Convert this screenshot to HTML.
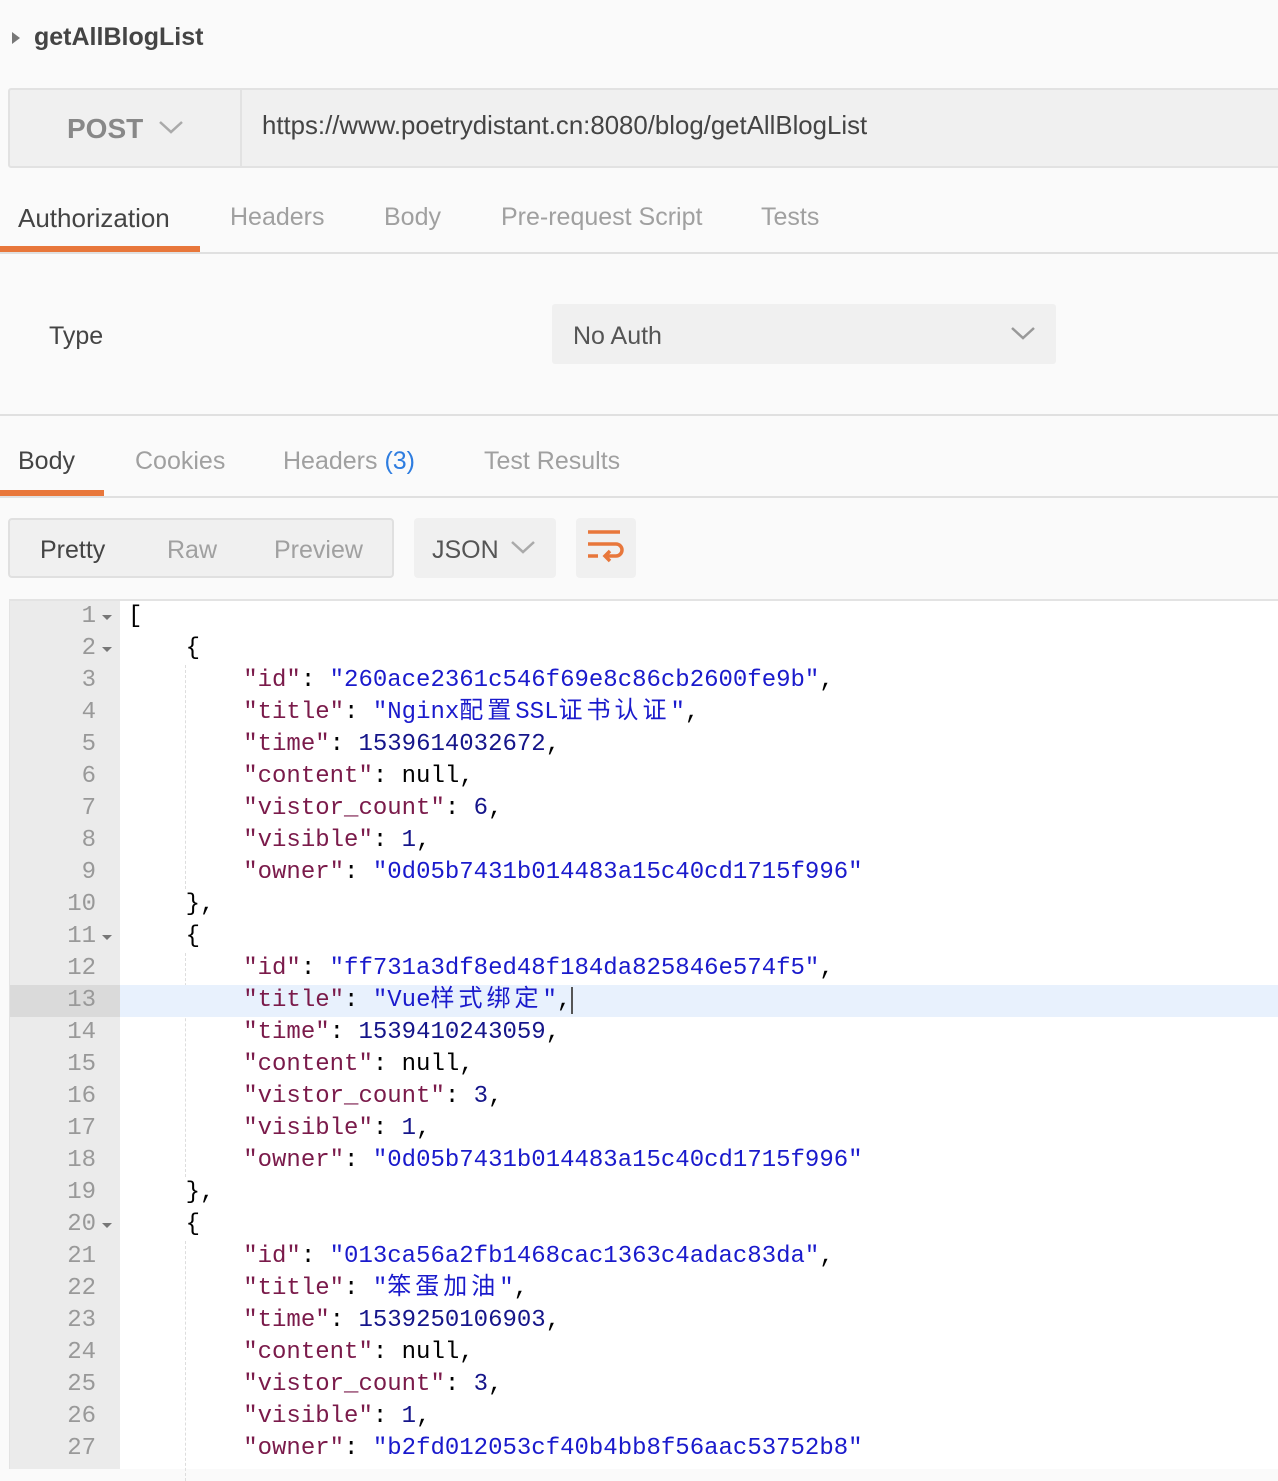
<!DOCTYPE html>
<html><head><meta charset="utf-8"><style>
*{margin:0;padding:0;box-sizing:border-box}
body{width:1278px;height:1456px;overflow:hidden;background:#fafafa;font-family:"Liberation Sans","Noto Sans CJK SC",sans-serif;position:relative}
.a{position:absolute}
.t{font-size:25px;color:#a0a0a0}
.code{position:absolute;left:9px;top:599px;width:1275px;height:870px;background:#fff;border-top:2px solid #e3e3e3;border-left:1px solid #e3e3e3}
.gut{position:absolute;left:0;top:0;width:110px;height:100%;background:#ebebeb}
.ln{position:absolute;left:0;height:32px;width:1270px;font-family:"Liberation Mono","Noto Sans CJK SC",monospace;font-size:24px;line-height:32px;color:#000;white-space:pre}
.ln .n{position:absolute;left:0;width:86px;text-align:right;color:#999}
.ln .c{position:absolute;left:118px}
.k{color:#7a1a4a}.s{color:#1a1acc}.d{color:#15158a}
.cj{letter-spacing:4px}
.hl{background:#e8f1fd}
.hl .n{background:#dadada;width:110px;padding-right:24px}
.fold{position:absolute;left:92px;top:14px;border-left:5px solid transparent;border-right:5px solid transparent;border-top:5px solid #777}
.guide{position:absolute;left:175px;border-left:1px dashed #ddd}
</style></head><body>
<div class="a" style="left:12px;top:32px;border-top:6px solid transparent;border-bottom:6px solid transparent;border-left:8px solid #777"></div>
<div class="a" style="left:34px;top:23px;font-size:25px;color:#444;font-weight:bold">getAllBlogList</div>
<div class="a" style="left:8px;top:88px;width:1280px;height:80px;background:#f0f0f0;border:2px solid #e2e2e2;border-radius:3px"></div>
<div class="a" style="left:240px;top:90px;width:2px;height:76px;background:#e2e2e2"></div>
<div class="a" style="left:67px;top:113px;font-size:28px;color:#888;font-weight:bold">POST</div>
<svg class="a" style="left:158px;top:120px" width="26" height="16"><path d="M2 2 L13 12 L24 2" stroke="#aaa" stroke-width="2.5" fill="none"/></svg>
<div class="a" style="left:262px;top:112px;font-size:25.8px;color:#444">https://www.poetrydistant.cn:8080/blog/getAllBlogList</div>
<div class="a t" style="left:18px;top:203px;color:#444;font-size:26px">Authorization</div>
<div class="a t" style="left:230px;top:203px">Headers</div>
<div class="a t" style="left:384px;top:203px">Body</div>
<div class="a t" style="left:501px;top:203px">Pre-request Script</div>
<div class="a t" style="left:761px;top:203px">Tests</div>
<div class="a" style="left:0;top:252px;width:1278px;height:2px;background:#e0e0e0"></div>
<div class="a" style="left:0;top:246px;width:200px;height:6px;background:#e8773b"></div>
<div class="a t" style="left:49px;top:322px;color:#444">Type</div>
<div class="a" style="left:552px;top:304px;width:504px;height:60px;background:#f0f0f0;border-radius:3px"></div>
<div class="a t" style="left:573px;top:322px;color:#555">No Auth</div>
<svg class="a" style="left:1010px;top:326px" width="26" height="16"><path d="M2 2 L13 12 L24 2" stroke="#999" stroke-width="2.5" fill="none"/></svg>
<div class="a" style="left:0;top:414px;width:1278px;height:2px;background:#e0e0e0"></div>
<div class="a t" style="left:18px;top:447px;color:#444">Body</div>
<div class="a t" style="left:135px;top:447px">Cookies</div>
<div class="a t" style="left:283px;top:447px">Headers <span style="color:#2e7de0">(3)</span></div>
<div class="a t" style="left:484px;top:447px">Test Results</div>
<div class="a" style="left:0;top:496px;width:1278px;height:2px;background:#e0e0e0"></div>
<div class="a" style="left:0;top:490px;width:104px;height:6px;background:#e8773b"></div>
<div class="a" style="left:8px;top:518px;width:386px;height:60px;background:#f0f0f0;border:2px solid #e0e0e0;border-radius:4px"></div>
<div class="a t" style="left:40px;top:536px;color:#444">Pretty</div>
<div class="a t" style="left:167px;top:536px">Raw</div>
<div class="a t" style="left:274px;top:536px">Preview</div>
<div class="a" style="left:414px;top:518px;width:142px;height:60px;background:#f0f0f0;border-radius:4px"></div>
<div class="a t" style="left:432px;top:536px;color:#555">JSON</div>
<svg class="a" style="left:510px;top:540px" width="26" height="16"><path d="M2 2 L13 12 L24 2" stroke="#aaa" stroke-width="2.5" fill="none"/></svg>
<div class="a" style="left:576px;top:518px;width:60px;height:60px;background:#f0f0f0;border-radius:4px"></div>
<svg class="a" style="left:586px;top:528px" width="40" height="40"><g stroke="#e8773b" stroke-width="3.5" fill="none"><path d="M2 4 H34"/><path d="M2 16 H30 a6 6 0 0 1 0 12 H20"/><path d="M2 28 H12"/><path d="M24 23 L19 28 L24 33"/></g></svg>
<div class="code">
<div class="gut"></div>
<div class="guide" style="top:64px;height:224px"></div>
<div class="guide" style="top:352px;height:224px"></div>
<div class="guide" style="top:640px;height:240px"></div>
<div class="ln" style="top:0"><span class="n">1</span><i class="fold"></i><span class="c">[</span></div>
<div class="ln" style="top:32px"><span class="n">2</span><i class="fold"></i><span class="c">    {</span></div>
<div class="ln" style="top:64px"><span class="n">3</span><span class="c">        <span class="k">"id"</span>: <span class="s">"260ace2361c546f69e8c86cb2600fe9b"</span>,</span></div>
<div class="ln" style="top:96px"><span class="n">4</span><span class="c">        <span class="k">"title"</span>: <span class="s">"Nginx<span class="cj">配置</span>SSL<span class="cj">证书认证</span>"</span>,</span></div>
<div class="ln" style="top:128px"><span class="n">5</span><span class="c">        <span class="k">"time"</span>: <span class="d">1539614032672</span>,</span></div>
<div class="ln" style="top:160px"><span class="n">6</span><span class="c">        <span class="k">"content"</span>: null,</span></div>
<div class="ln" style="top:192px"><span class="n">7</span><span class="c">        <span class="k">"vistor_count"</span>: <span class="d">6</span>,</span></div>
<div class="ln" style="top:224px"><span class="n">8</span><span class="c">        <span class="k">"visible"</span>: <span class="d">1</span>,</span></div>
<div class="ln" style="top:256px"><span class="n">9</span><span class="c">        <span class="k">"owner"</span>: <span class="s">"0d05b7431b014483a15c40cd1715f996"</span></span></div>
<div class="ln" style="top:288px"><span class="n">10</span><span class="c">    },</span></div>
<div class="ln" style="top:320px"><span class="n">11</span><i class="fold"></i><span class="c">    {</span></div>
<div class="ln" style="top:352px"><span class="n">12</span><span class="c">        <span class="k">"id"</span>: <span class="s">"ff731a3df8ed48f184da825846e574f5"</span>,</span></div>
<div class="ln hl" style="top:384px"><span class="n">13</span><span class="c">        <span class="k">"title"</span>: <span class="s">"Vue<span class="cj">样式绑定</span>"</span>,<span style="border-left:2px solid #555"></span></span></div>
<div class="ln" style="top:416px"><span class="n">14</span><span class="c">        <span class="k">"time"</span>: <span class="d">1539410243059</span>,</span></div>
<div class="ln" style="top:448px"><span class="n">15</span><span class="c">        <span class="k">"content"</span>: null,</span></div>
<div class="ln" style="top:480px"><span class="n">16</span><span class="c">        <span class="k">"vistor_count"</span>: <span class="d">3</span>,</span></div>
<div class="ln" style="top:512px"><span class="n">17</span><span class="c">        <span class="k">"visible"</span>: <span class="d">1</span>,</span></div>
<div class="ln" style="top:544px"><span class="n">18</span><span class="c">        <span class="k">"owner"</span>: <span class="s">"0d05b7431b014483a15c40cd1715f996"</span></span></div>
<div class="ln" style="top:576px"><span class="n">19</span><span class="c">    },</span></div>
<div class="ln" style="top:608px"><span class="n">20</span><i class="fold"></i><span class="c">    {</span></div>
<div class="ln" style="top:640px"><span class="n">21</span><span class="c">        <span class="k">"id"</span>: <span class="s">"013ca56a2fb1468cac1363c4adac83da"</span>,</span></div>
<div class="ln" style="top:672px"><span class="n">22</span><span class="c">        <span class="k">"title"</span>: <span class="s">"<span class="cj">笨蛋加油</span>"</span>,</span></div>
<div class="ln" style="top:704px"><span class="n">23</span><span class="c">        <span class="k">"time"</span>: <span class="d">1539250106903</span>,</span></div>
<div class="ln" style="top:736px"><span class="n">24</span><span class="c">        <span class="k">"content"</span>: null,</span></div>
<div class="ln" style="top:768px"><span class="n">25</span><span class="c">        <span class="k">"vistor_count"</span>: <span class="d">3</span>,</span></div>
<div class="ln" style="top:800px"><span class="n">26</span><span class="c">        <span class="k">"visible"</span>: <span class="d">1</span>,</span></div>
<div class="ln" style="top:832px"><span class="n">27</span><span class="c">        <span class="k">"owner"</span>: <span class="s">"b2fd012053cf40b4bb8f56aac53752b8"</span></span></div>
</div>
</body></html>
